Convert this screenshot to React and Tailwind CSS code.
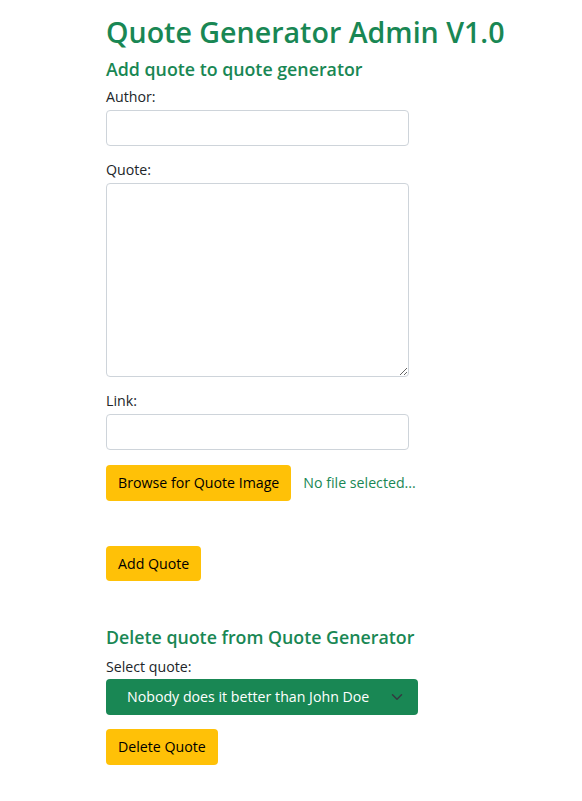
export default function App() {
  return (
    <div className="min-h-screen bg-white font-['Open_Sans',sans-serif] text-[#212529]">
      <div className="pl-[106px] pt-[15px]">
        <h1 className="text-[28.6px] font-semibold leading-[1.2] text-[#198754]">Quote Generator Admin V1.0</h1>
        <h4 className="mt-[10px] text-[17.8px] font-semibold leading-[1.2] text-[#198754]">Add quote to quote generator</h4>

        <form className="mt-[5px] w-[303px]">
          <label className="block text-[14.2px] leading-[22px]">Author:</label>
          <input className="mt-[2px] block h-[36px] w-full rounded border border-[#ced4da]" />

          <label className="mt-[13px] block text-[14.2px] leading-[22px]">Quote:</label>
          <textarea className="mt-[2px] block h-[194px] w-full rounded border border-[#ced4da]" />

          <label className="mt-[13px] block text-[14.2px] leading-[22px]">Link:</label>
          <input className="mt-[2px] block h-[36px] w-full rounded border border-[#ced4da]" />

          <div className="mt-[15px] flex items-center gap-3 whitespace-nowrap">
            <button type="button" className="h-[36px] rounded bg-[#ffc107] px-3 text-[14.2px] text-black">Browse for Quote Image</button>
            <span className="text-[14.2px] text-[#198754]">No file selected...</span>
          </div>

          <button type="button" className="mt-[45px] h-[35px] rounded bg-[#ffc107] px-3 text-[14.2px] text-black">Add Quote</button>
        </form>

        <h4 className="mt-[46px] text-[17.8px] font-semibold leading-[1.2] text-[#198754]">Delete quote from Quote Generator</h4>
        <label className="mt-[8px] block text-[14.2px] leading-[22px]">Select quote:</label>
        <div className="relative mt-[1px] flex h-[36px] w-[312px] items-center rounded bg-[#198754] pl-[21px] text-[14.2px] text-white">
          <span>Nobody does it better than John Doe</span>
          <svg className="absolute right-[15px] top-[12px]" width="12" height="12" viewBox="0 0 16 16" fill="none" stroke="#343a40" strokeWidth="2" strokeLinecap="round" strokeLinejoin="round">
            <path d="M2 5l6 6 6-6" />
          </svg>
        </div>
        <button type="button" className="mt-[14px] h-[36px] rounded bg-[#ffc107] px-3 text-[14.2px] text-black">Delete Quote</button>
      </div>
    </div>
  );
}
